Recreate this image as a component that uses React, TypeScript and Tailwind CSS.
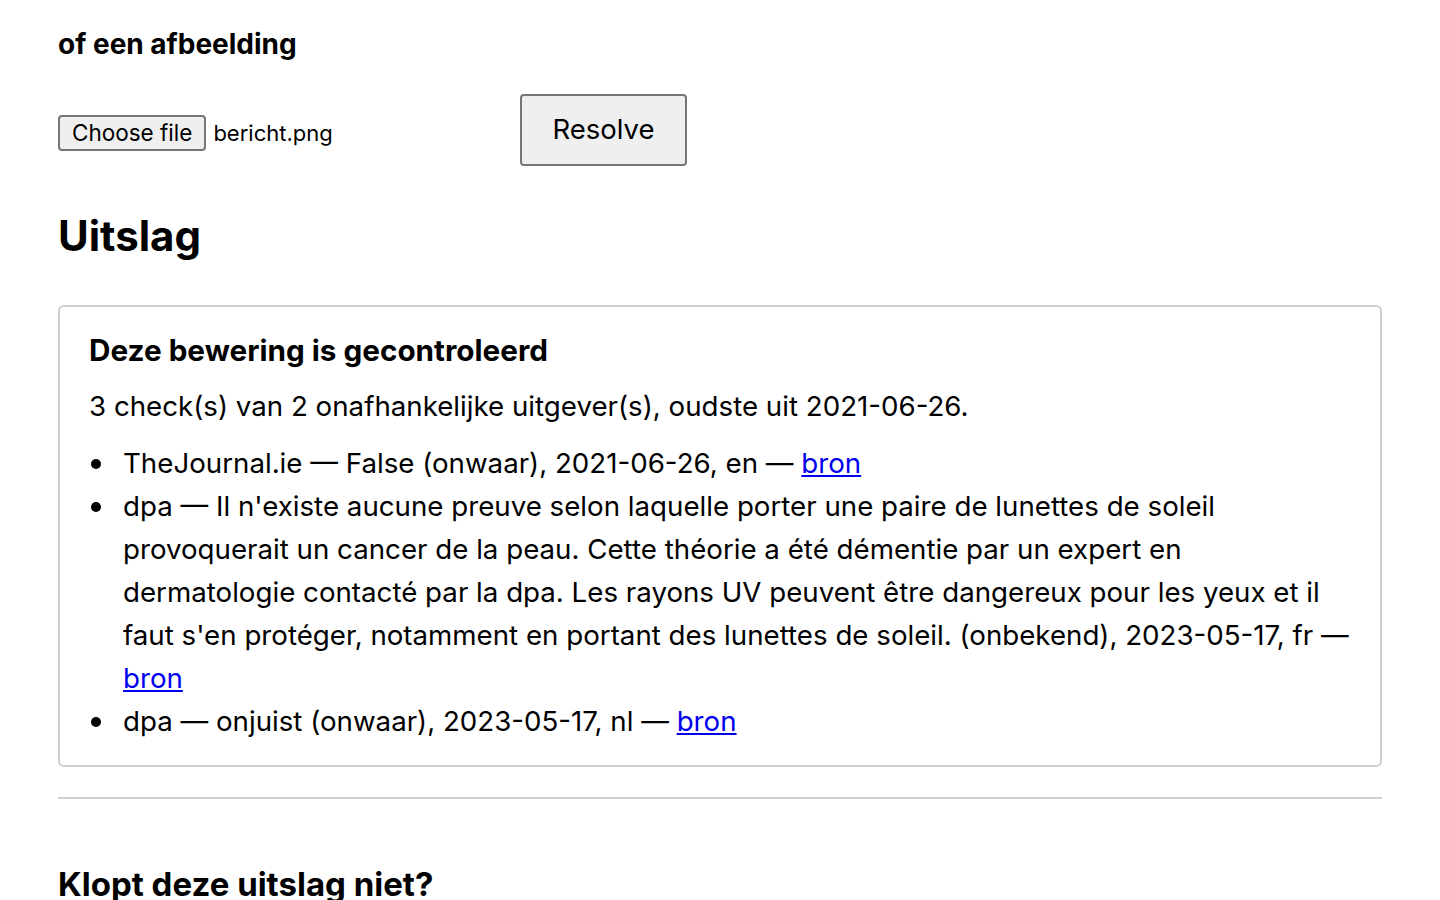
import React from "react";

function Item({ children }: { children: React.ReactNode }) {
  return (
    <li className="flex">
      <span className="flex h-[43px] w-[34px] shrink-0 items-center">
        <span className="ml-[2px] size-[10px] rounded-full bg-black" />
      </span>
      <span>{children}</span>
    </li>
  );
}

export default function App() {
  return (
    <div
      className="min-h-screen bg-white px-[58px] text-black"
      style={{ fontFamily: "Inter, 'Liberation Sans', sans-serif" }}
    >
      <h3 className="pt-[27px] text-[28px] font-bold leading-[34px]">of een afbeelding</h3>

      <div className="mt-[33px] flex items-center">
        <div className="flex w-[462px] items-center pt-[6px]">
          <span className="flex h-[36px] items-center rounded-[4px] border-2 border-[#767676] bg-[#efefef] px-[12px] text-[22.5px] leading-none">
            Choose file
          </span>
          <span className="ml-[7px] text-[22px] leading-none">bericht.png</span>
        </div>
        <button className="flex h-[72px] w-[167px] items-center justify-center rounded-[4px] border-2 border-[#767676] bg-[#efefef] text-[27.5px] leading-none">
          Resolve
        </button>
      </div>

      <h2 className="mt-[46px] text-[42px] font-bold leading-[48px]">Uitslag</h2>

      <div className="mt-[45px] rounded-[6px] border-2 border-[#d0d0d0] pb-[22px] pl-[29px] pr-[29px] pt-[26px]">
        <h3 className="text-[29.7px] font-bold leading-[34px]">Deze bewering is gecontroleerd</h3>
        <p className="mt-[18px] text-[27.7px] leading-[43px]">
          3 check(s) van 2 onafhankelijke uitgever(s), oudste uit 2021-06-26.
        </p>
        <ul className="mt-[14px] text-[27.7px] leading-[43px]">
          <Item>
            TheJournal.ie — False (onwaar), 2021-06-26, en —{" "}
            <a href="#" className="text-[#0000ee] underline">bron</a>
          </Item>
          <Item>
            dpa — Il n'existe aucune preuve selon laquelle porter une paire de lunettes de soleil
            provoquerait un cancer de la peau. Cette théorie a été démentie par un expert en
            dermatologie contacté par la dpa. Les rayons UV peuvent être dangereux pour les yeux et il
            faut s'en protéger, notamment en portant des lunettes de soleil. (onbekend), 2023-05-17, fr —{" "}
            <a href="#" className="text-[#0000ee] underline">bron</a>
          </Item>
          <Item>
            dpa — onjuist (onwaar), 2023-05-17, nl —{" "}
            <a href="#" className="text-[#0000ee] underline">bron</a>
          </Item>
        </ul>
      </div>

      <hr className="mt-[30px] border-t-2 border-[#d0d0d0]" />

      <h3 className="mt-[66px] pb-[40px] text-[33px] font-bold leading-[38px]">Klopt deze uitslag niet?</h3>
    </div>
  );
}
